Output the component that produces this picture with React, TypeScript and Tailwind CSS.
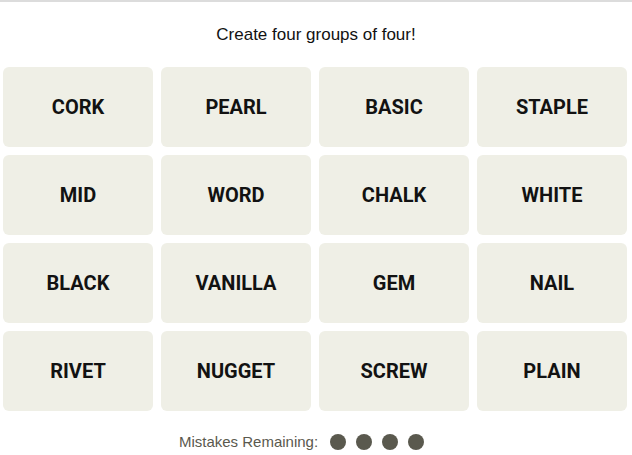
const WORDS = [
  "CORK", "PEARL", "BASIC", "STAPLE",
  "MID", "WORD", "CHALK", "WHITE",
  "BLACK", "VANILLA", "GEM", "NAIL",
  "RIVET", "NUGGET", "SCREW", "PLAIN",
];

export default function App() {
  return (
    <div className="w-[632px] h-[455px] bg-white border-t-2 border-[#dcdcdc] font-['Liberation_Sans',Arial,sans-serif]">
      {/* Titel */}
      <div className="h-[65px] flex items-center justify-center text-[17px] text-[#121212]">
        Create four groups of four!
      </div>

      {/* Spielfeld */}
      <div className="ml-[3px] grid grid-cols-[repeat(4,150px)] auto-rows-[80px] gap-2">
        {WORDS.map((w) => (
          <button
            key={w}
            className="rounded-md bg-[#efefe6] flex items-center justify-center font-['Roboto',sans-serif] font-bold text-[20px] text-[#121212]"
          >
            {w}
          </button>
        ))}
      </div>

      {/* Fehler */}
      <div className="mt-[23px] h-4 flex items-center justify-center pr-[29px]">
        <span className="text-[15px] text-[#5a594e] mr-[12px] font-['Liberation_Sans',sans-serif]">
          Mistakes Remaining:
        </span>
        <div className="flex gap-[10px]">
          {[0, 1, 2, 3].map((i) => (
            <span key={i} className="w-4 h-4 rounded-full bg-[#5a594e]" />
          ))}
        </div>
      </div>
    </div>
  );
}
